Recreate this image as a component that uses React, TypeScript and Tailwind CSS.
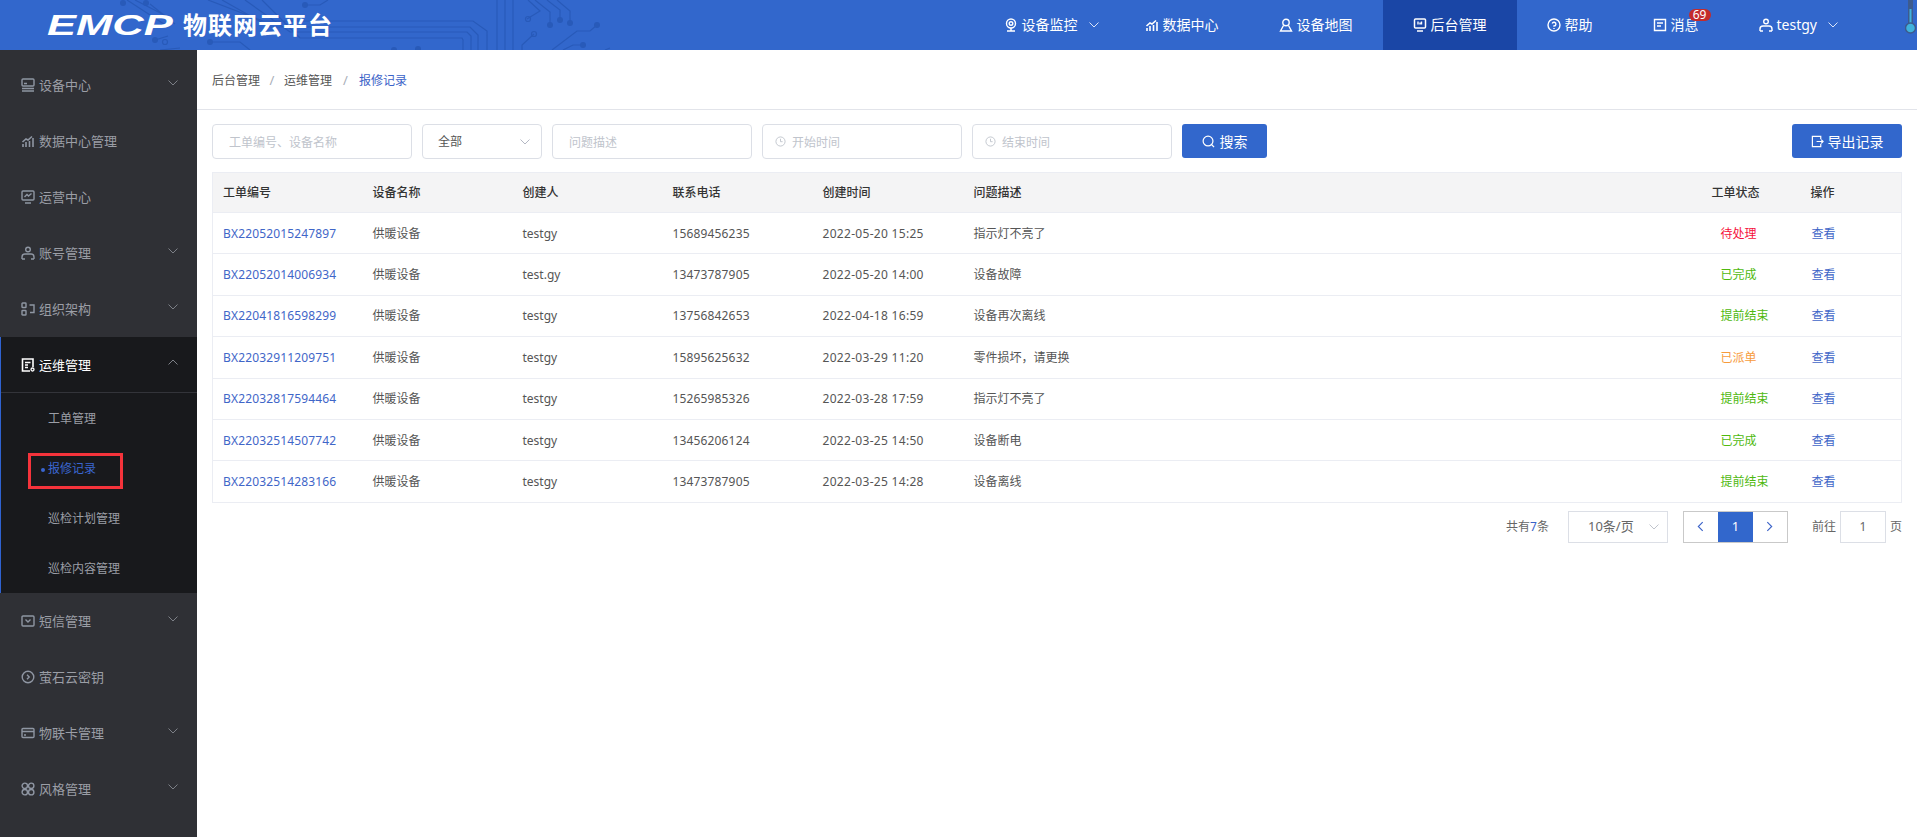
import React from "react";

const Svg = ({ children, className = "w-[14px] h-[14px]" }: { children: React.ReactNode; className?: string }) => (
  <svg viewBox="0 0 14 14" fill="none" stroke="currentColor" strokeWidth="1.400" className={`${className} shrink-0`}>
    {children}
  </svg>
);

const Chevron = ({ className = "w-[10px] h-[6px]", up = false }: { className?: string; up?: boolean }) => (
  <svg viewBox="0 0 10 6" fill="none" stroke="currentColor" strokeWidth="1" className={`${className} shrink-0`}>
    <path d={up ? "M.5 5.5 5 1l4.500 4.500" : "M.5.5 5 5 9.500.5"} />
  </svg>
);

const Icons: Record<string, React.ReactNode> = {
  device: (
    <Svg>
      <rect x="1" y="1" width="12" height="7" rx="1" />
      <path d="M3 5.500h3M1 10.500h12M1 13h12" />
    </Svg>
  ),
  data: (
    <Svg>
      <path d="M2 13v-3M5 13V8M8.500 13V7M12 13V4M1.500 8 5 5l2 1 4-3.500" strokeWidth="1.600" />
    </Svg>
  ),
  ops: (
    <Svg>
      <rect x="1" y="1" width="12" height="9" rx="1" />
      <path d="M3.500 7 6 4.500 7.500 6 10.500 3.500M4 13h6" />
    </Svg>
  ),
  user: (
    <Svg>
      <circle cx="7" cy="3.500" r="2.300" />
      <path d="M1 13v-2a3 3 0 0 1 3-3h6a3 3 0 0 1 3 3v2M1 13h3M10 13h3" />
    </Svg>
  ),
  org: (
    <Svg>
      <rect x="1" y="1" width="4" height="4.500" rx=".6" />
      <rect x="1" y="8.500" width="4" height="4.500" rx=".6" />
      <path d="M8.500 3H13v7.500H9" />
    </Svg>
  ),
  maint: (
    <Svg>
      <path d="M9 13H1.500V1h10.500v8" strokeWidth="1.600" />
      <path d="M4 4.500h5.500M4 7h3M4 9.500h3" strokeWidth="1.500" />
      <circle cx="11.500" cy="11.500" r="1.500" strokeWidth="1.300" />
    </Svg>
  ),
  sms: (
    <Svg>
      <rect x="1" y="2" width="12" height="10" rx="1" />
      <path d="M4.500 5.500 7 8l2.500-2.500" />
    </Svg>
  ),
  key: (
    <Svg>
      <circle cx="7" cy="7" r="5.800" />
      <path d="M6 4.800 8.200 7 6 9.200" />
    </Svg>
  ),
  card: (
    <Svg>
      <rect x="1" y="2.500" width="12" height="9" rx="1" />
      <path d="M1 5.500h12M3 9h2" />
    </Svg>
  ),
  style: (
    <Svg>
      <circle cx="3.800" cy="3.800" r="2.700" />
      <circle cx="10.200" cy="3.800" r="2.700" />
      <circle cx="3.800" cy="10.200" r="2.700" />
      <circle cx="10.200" cy="10.200" r="2.700" />
    </Svg>
  ),
};

const Clock = () => (
  <svg viewBox="0 0 12 12" fill="none" stroke="currentColor" strokeWidth="1" className="w-[11px] h-[11px] shrink-0">
    <circle cx="6" cy="6" r="5" />
    <path d="M6 3v3.200h2.300" />
  </svg>
);

const Circuit = () => (
  <svg className="absolute left-0 top-0 w-[700px] h-[50px]" viewBox="0 0 700 50" fill="none" stroke="#285ab9" strokeWidth="1.200">
    <path d="M343 21h130l14 10v19M300 27h170l8 8v15M300 32h167l4 4v14M300 38h162l1 2v10" />
    <path d="M497 0v50M505 0v50M513 0v50" />
    <path d="M528 0l12 11-13 8M535 0l15 12v13M547 0l13 10v10M557 0l13 11v12" />
    <path d="M597 25l-7 6h-13l-25 19M534 34l-12 11v5M583 45h-10l-10 5M610 48l-5 2" />
    <path d="M208 0l55 21h80M222 0l48 27h30M245 0l45 32h10M262 0l38 38" />
    <path d="M127 0l40 26M135 0l35 18M150 4l25 20M328 0l-8 5h-15" />
    <path d="M168 36l-13 4M210 42h30l10 8M180 48l-20 2" />
    <g fill="#285ab9" stroke="none">
      <circle cx="123" cy="3" r="3" />
      <circle cx="146" cy="3" r="3" />
      <circle cx="305" cy="5" r="3" />
      <circle cx="550" cy="25" r="3" />
      <circle cx="560" cy="20" r="3" />
      <circle cx="570" cy="23" r="3" />
      <circle cx="597" cy="25" r="3" />
      <circle cx="583" cy="45" r="3" />
      <circle cx="394" cy="50" r="3" />
      <circle cx="418" cy="49" r="3" />
      <circle cx="155" cy="40" r="3" />
      <circle cx="210" cy="42" r="3" />
    </g>
    <circle cx="528" cy="19" r="2.500" />
    <circle cx="534" cy="34" r="2.500" />
    <circle cx="165" cy="42" r="2.500" />
  </svg>
);

const navItems: { label: string; icon: React.ReactNode; active?: boolean; chev?: boolean; badge?: boolean; cls: string }[] = [
  {
    label: "设备监控",
    chev: true,
    cls: "pl-[30px] pr-[16px]",
    icon: (
      <Svg>
        <circle cx="7" cy="5.500" r="4.500" />
        <circle cx="7" cy="5.500" r="1.800" />
        <path d="M3 13h8M7 10v3" strokeWidth="1.500" />
      </Svg>
    ),
  },
  {
    label: "数据中心",
    cls: "px-[30px]",
    icon: Icons.data,
  },
  {
    label: "设备地图",
    cls: "px-[30px]",
    icon: (
      <Svg>
        <circle cx="7" cy="4.500" r="3.200" />
        <path d="M4.500 7.500 1.500 13h11l-3-5.500" />
      </Svg>
    ),
  },
  {
    label: "后台管理",
    active: true,
    cls: "px-[30px]",
    icon: (
      <Svg>
        <rect x="1.500" y="1" width="11" height="9" rx="1" strokeWidth="1.500" />
        <path d="M5 3.500v3M8.500 3.500v3M7 4.500v2M4 13h6" />
      </Svg>
    ),
  },
  {
    label: "帮助",
    cls: "px-[30px]",
    icon: (
      <Svg>
        <circle cx="7" cy="7" r="6" />
        <path d="M5.200 5.500A1.900 1.900 0 1 1 7 8v.8M7 10v1" />
      </Svg>
    ),
  },
  {
    label: "消息",
    badge: true,
    cls: "px-[30px]",
    icon: (
      <Svg>
        <path d="M12.500 12.500h-11v-11h11z" strokeWidth="1.400" />
        <path d="M4 5h6M4 8h4" />
      </Svg>
    ),
  },
  {
    label: "testgy",
    chev: true,
    cls: "pl-[30px] pr-[10px]",
    icon: Icons.user,
  },
];

const sideTop = [
  { label: "设备中心", icon: "device", chev: true },
  { label: "数据中心管理", icon: "data" },
  { label: "运营中心", icon: "ops" },
  { label: "账号管理", icon: "user", chev: true },
  { label: "组织架构", icon: "org", chev: true },
];
const sideBottom = [
  { label: "短信管理", icon: "sms", chev: true },
  { label: "萤石云密钥", icon: "key" },
  { label: "物联卡管理", icon: "card", chev: true },
  { label: "风格管理", icon: "style", chev: true },
];

const SideItem = ({ label, icon, chev }: { label: string; icon: string; chev?: boolean }) => (
  <div className="h-[56px] flex items-center pl-[21px] pr-[19px] gap-[4px] text-[13px] text-[#9b9ea6]">
    <span className="text-[#8f96a3]">{Icons[icon]}</span>
    <span className="mt-[2px]">{label}</span>
    {chev && (
      <span className="ml-auto mb-[5px] text-[#7d8087]">
        <Chevron />
      </span>
    )}
  </div>
);

const rows = [
  ["BX22052015247897", "供暖设备", "testgy", "15689456235", "2022-05-20 15:25", "指示灯不亮了", "待处理"],
  ["BX22052014006934", "供暖设备", "test.gy", "13473787905", "2022-05-20 14:00", "设备故障", "已完成"],
  ["BX22041816598299", "供暖设备", "testgy", "13756842653", "2022-04-18 16:59", "设备再次离线", "提前结束"],
  ["BX22032911209751", "供暖设备", "testgy", "15895625632", "2022-03-29 11:20", "零件损坏，请更换", "已派单"],
  ["BX22032817594464", "供暖设备", "testgy", "15265985326", "2022-03-28 17:59", "指示灯不亮了", "提前结束"],
  ["BX22032514507742", "供暖设备", "testgy", "13456206124", "2022-03-25 14:50", "设备断电", "已完成"],
  ["BX22032514283166", "供暖设备", "testgy", "13473787905", "2022-03-25 14:28", "设备离线", "提前结束"],
];

const statusColor: Record<string, string> = {
  待处理: "text-[#f5113c]",
  已完成: "text-[#4fb90f]",
  提前结束: "text-[#4fb90f]",
  已派单: "text-[#f79b3c]",
};

const headers = ["工单编号", "设备名称", "创建人", "联系电话", "创建时间", "问题描述", "工单状态", "操作"];
const headerPad = ["pl-[10px]", "pl-[10px]", "pl-[10px]", "pl-[10px]", "pl-[10px]", "pl-[11px]", "pl-[12px]", "pl-[11px]"];

const inputCls =
  "w-[200px] h-[35px] border border-[#dcdfe6] rounded-[4px] pl-[16px] pt-[2px] text-[12px] outline-none placeholder:text-[#c0c4cc]";

const DateBox = ({ label }: { label: string }) => (
  <div className="w-[200px] h-[35px] border border-[#dcdfe6] rounded-[4px] pl-[12px] flex items-center gap-[6px] text-[12px] text-[#c0c4cc]">
    <Clock />
    <span className="mt-[2px]">{label}</span>
  </div>
);

export default function App() {
  return (
    <div
      className="w-full h-[837px] flex flex-col overflow-hidden bg-white"
      style={{ fontFamily: '"Noto Sans", "Noto Sans CJK SC", sans-serif' }}
    >
      <header className="relative h-[50px] shrink-0 bg-[#3267cc] flex items-stretch text-white">
        <Circuit />
        <div className="relative flex items-center pl-[47px]">
          <span
            className="w-[128px] text-[29px] leading-none font-bold italic origin-left scale-x-[1.5]"
            style={{ fontFamily: '"Liberation Sans", sans-serif' }}
          >
            EMCP
          </span>
          <span className="ml-[8px] text-[24px] leading-none font-bold tracking-[1px]">物联网云平台</span>
        </div>
        <nav className="relative ml-auto mr-[69px] flex items-stretch text-[14px]">
          {navItems.map((n) => (
            <div key={n.label} className={`flex items-center gap-[4px] ${n.cls} ${n.active ? "bg-[#1a46a6]" : ""}`}>
              {n.icon}
              <span className="relative mb-[1px]">
                {n.label}
                {n.badge && (
                  <span className="absolute -top-[5px] -right-[12px] w-[22px] h-[12px] rounded-full bg-[#c42b2b] text-[12px] leading-[12px] text-center text-white">
                    69
                  </span>
                )}
              </span>
              {n.chev && (
                <span className="ml-[7px] text-[#dbe5f8]">
                  <Chevron />
                </span>
              )}
            </div>
          ))}
        </nav>
        <svg className="absolute right-0 top-0 w-[12px] h-[36px]" viewBox="0 0 12 36" fill="none">
          <rect x="3" y="0" width="5" height="26" fill="#3d5b8e" />
          <rect x="4.500" y="9" width="2" height="17" fill="#3fb2dd" />
          <circle cx="5.500" cy="28" r="5" fill="#3fb2dd" stroke="#3d5b8e" strokeWidth="1.500" />
        </svg>
      </header>

      <div className="flex-1 flex min-h-0">
        <aside className="w-[197px] shrink-0 bg-[#2f3035] pt-[7px]">
          {sideTop.map((s) => (
            <SideItem key={s.label} {...s} />
          ))}
          <div className="bg-[#18191c] border-l border-[#2f62d0]">
            <div className="h-[56px] flex items-center pl-[20px] pr-[19px] gap-[4px] text-[13px] text-white border-b border-[#33343a]">
              {Icons.maint}
              <span className="mt-[2px]">运维管理</span>
              <span className="ml-auto mb-[5px] text-[#7d8087]">
                <Chevron up />
              </span>
            </div>
            <div className="h-[50px] flex items-center pl-[47px] pt-[2px] text-[12px] text-[#9b9ea6]">工单管理</div>
            <div className="relative h-[50px] flex items-center pl-[47px] pt-[2px] text-[12px] text-[#3a66d0]">
              <span className="absolute left-[40px] top-[25px] w-[4px] h-[4px] rounded-full bg-[#3a66d0]" />
              报修记录
              <span className="absolute left-[27px] top-[10px] w-[95px] h-[36px] border-[3px] border-[#f5333b]" />
            </div>
            <div className="h-[50px] flex items-center pl-[47px] pt-[2px] text-[12px] text-[#9b9ea6]">巡检计划管理</div>
            <div className="h-[50px] flex items-center pl-[47px] pt-[2px] text-[12px] text-[#9b9ea6]">巡检内容管理</div>
          </div>
          {sideBottom.map((s) => (
            <SideItem key={s.label} {...s} />
          ))}
        </aside>

        <main className="flex-1 min-w-0">
          <div className="h-[60px] border-b border-[#e2e4ea] pl-[15px] pt-[2px] flex items-center text-[12px] text-[#555]">
            <span>后台管理</span>
            <span className="w-[24px] text-center text-[13px] text-[#a9aeb8]">/</span>
            <span>运维管理</span>
            <span className="w-[27px] text-center text-[13px] text-[#a9aeb8]">/</span>
            <span className="text-[#3a62c8]">报修记录</span>
          </div>

          <div className="px-[15px] pt-[14px]">
            <div className="flex items-start gap-[10px]">
              <input className={inputCls} placeholder="工单编号、设备名称" />
              <div className="w-[120px] h-[35px] border border-[#dcdfe6] rounded-[4px] pl-[15px] pr-[11px] flex items-center justify-between text-[12px] text-[#555]">
                <span>全部</span>
                <span className="text-[#b4b8c4]">
                  <Chevron />
                </span>
              </div>
              <input className={inputCls} placeholder="问题描述" />
              <DateBox label="开始时间" />
              <DateBox label="结束时间" />
              <button className="w-[85px] h-[34px] rounded-[3px] bg-[#3267cc] text-white text-[14px] flex items-center justify-center gap-[5px]">
                <svg viewBox="0 0 14 14" fill="none" stroke="currentColor" strokeWidth="1.300" className="w-[13px] h-[13px]">
                  <circle cx="6.500" cy="6.500" r="5.300" />
                  <path d="m10.500 10.500 2.500 2.500" />
                </svg>
                搜索
              </button>
              <button className="ml-auto w-[110px] h-[34px] rounded-[3px] bg-[#3267cc] text-white text-[14px] flex items-center justify-center gap-[4px]">
                <svg viewBox="0 0 14 14" fill="none" stroke="currentColor" strokeWidth="1.300" className="w-[13px] h-[13px]">
                  <path d="M10.500 4.500V1.500H1.500v11h9V9.500M6 7h7M11 5l2 2-2 2" />
                </svg>
                导出记录
              </button>
            </div>

            <table className="mt-[13px] w-full table-fixed border-collapse border border-[#ebedf3] text-[12px] text-[#555]">
              <colgroup>
                <col className="w-[150px]" />
                <col className="w-[150px]" />
                <col className="w-[150px]" />
                <col className="w-[150px]" />
                <col className="w-[150px]" />
                <col />
                <col className="w-[100px]" />
                <col className="w-[102px]" />
              </colgroup>
              <thead>
                <tr className="h-[40px] bg-[#f4f4f5]">
                  {headers.map((h, i) => (
                    <th key={h} className={`${headerPad[i]} text-left font-medium text-[#333]`}>
                      {h}
                    </th>
                  ))}
                </tr>
              </thead>
              <tbody>
                {rows.map((r) => (
                  <tr key={r[0]} className="h-[41.4px] border-t border-[#ebedf3]">
                    <td className="pl-[10px] pt-[1px] text-[#3f66c8] tracking-[0.15px]">{r[0]}</td>
                    <td className="pl-[10px] pt-[1px]">{r[1]}</td>
                    <td className="pl-[10px] pt-[1px]">{r[2]}</td>
                    <td className="pl-[10px] pt-[1px] tracking-[0.15px]">{r[3]}</td>
                    <td className="pl-[10px] pt-[1px] tracking-[0.3px]">{r[4]}</td>
                    <td className="pl-[11px] pt-[1px]">{r[5]}</td>
                    <td className={`pl-[21px] pt-[1px] ${statusColor[r[6]]}`}>{r[6]}</td>
                    <td className="pl-[12px] pt-[1px] text-[#3f66c8]">查看</td>
                  </tr>
                ))}
              </tbody>
            </table>

            <div className="mt-[8px] flex items-center justify-end text-[12px] text-[#666]">
              <span>
                共有<span className="text-[#3a62c8]">7</span>条
              </span>
              <div className="ml-[19px] w-[100px] h-[32px] border border-[#dcdfe6] flex items-center pl-[19px] pr-[8px] justify-between text-[13px]">
                <span>10条/页</span>
                <span className="text-[#c0c4cc]">
                  <Chevron />
                </span>
              </div>
              <div className="ml-[15px] h-[32px] flex border border-[#c9c9c9]">
                <div className="w-[34px] flex items-center justify-center text-[#3a62c8]">
                  <svg viewBox="0 0 8 12" fill="none" stroke="currentColor" strokeWidth="1.300" className="w-[7px] h-[11px]">
                    <path d="M6.500 1 1.500 6l5 5" />
                  </svg>
                </div>
                <div className="w-[35px] bg-[#3267cc] text-white text-[13px] flex items-center justify-center">1</div>
                <div className="w-[34px] flex items-center justify-center text-[#3a62c8]">
                  <svg viewBox="0 0 8 12" fill="none" stroke="currentColor" strokeWidth="1.300" className="w-[7px] h-[11px]">
                    <path d="m1.500 1 5 5-5 5" />
                  </svg>
                </div>
              </div>
              <span className="ml-[24px]">前往</span>
              <div className="ml-[4px] w-[46px] h-[32px] border border-[#dcdfe6] flex items-center justify-center">1</div>
              <span className="ml-[4px]">页</span>
            </div>
          </div>
        </main>
      </div>
    </div>
  );
}
